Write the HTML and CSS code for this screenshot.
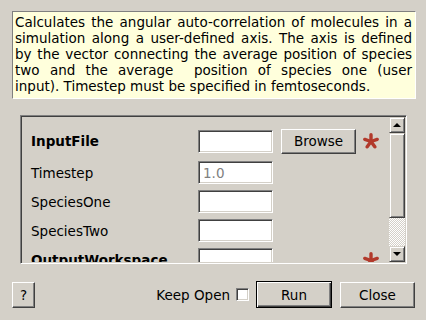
FILE: index.html
```html
<!DOCTYPE html>
<html lang="en">
<head>
    <meta charset="UTF-8">
    <title>CalculateAngularAutoCorrelation</title>
    <link rel="stylesheet" href="styles.css">
</head>
<body>
    <div class="dialog">
        <div class="description">
            <div class="line">Calculates the angular auto-correlation of molecules in a</div>
            <div class="line">simulation along a user-defined axis. The axis is defined</div>
            <div class="line">by the vector connecting the average position of species</div>
            <div class="line">two and the average &nbsp;position of species one (user</div>
            <div class="line last">input). Timestep must be specified in femtoseconds.</div>
        </div>

        <div class="scroll-area">
            <div class="viewport">
                <div class="props">
                    <label class="prop-name required">InputFile</label>
                    <input class="prop-input" type="text">
                    <button class="btn browse">Browse</button>
                    <svg class="star" viewBox="0 0 16 16"><g stroke="#b23a2c" stroke-width="3.4" stroke-linecap="round"><line x1="8" y1="8.5" x2="8" y2="1.8"/><line x1="8" y1="8.5" x2="14.2" y2="6.4"/><line x1="8" y1="8.5" x2="11.8" y2="13.8"/><line x1="8" y1="8.5" x2="4.2" y2="13.8"/><line x1="8" y1="8.5" x2="1.8" y2="6.4"/></g></svg>

                    <label class="prop-name">Timestep</label>
                    <input class="prop-input" type="text" placeholder="1.0">
                    <span></span><span></span>

                    <label class="prop-name">SpeciesOne</label>
                    <input class="prop-input" type="text">
                    <span></span><span></span>

                    <label class="prop-name">SpeciesTwo</label>
                    <input class="prop-input" type="text">
                    <span></span><span></span>

                    <label class="prop-name required">OutputWorkspace</label>
                    <input class="prop-input" type="text">
                    <span></span>
                    <svg class="star" viewBox="0 0 16 16"><g stroke="#b23a2c" stroke-width="3.4" stroke-linecap="round"><line x1="8" y1="8.5" x2="8" y2="1.8"/><line x1="8" y1="8.5" x2="14.2" y2="6.4"/><line x1="8" y1="8.5" x2="11.8" y2="13.8"/><line x1="8" y1="8.5" x2="4.2" y2="13.8"/><line x1="8" y1="8.5" x2="1.8" y2="6.4"/></g></svg>
                </div>
            </div>
            <div class="scrollbar">
                <div class="sb-btn"><span class="arrow up"></span></div>
                <div class="sb-handle"></div>
                <div class="sb-track"></div>
                <div class="sb-btn"><span class="arrow down"></span></div>
            </div>
        </div>

        <div class="footer">
            <button class="btn help">?</button>
            <div class="spacer"></div>
            <label class="keep-open">Keep Open <span class="checkbox"></span></label>
            <button class="btn run">Run</button>
            <button class="btn close">Close</button>
        </div>
    </div>
</body>
</html>
```

FILE: styles.css
```css
body {
    margin: 0;
    padding: 0;
    background-color: #d4d0c8;
    font-family: "DejaVu Sans", sans-serif;
    font-size: 13.5px;
    color: #000;
}

.dialog {
    width: 426px;
    height: 320px;
    box-sizing: border-box;
    padding: 11px 10px 0 12px;
}

.description {
    height: 88px;
    box-sizing: border-box;
    background-color: #ffffdc;
    border: 1px solid;
    border-color: #808080 #ffffff #ffffff #808080;
    padding: 2px 3px 4px 2px;
    line-height: 16px;
}

.description .line {
    text-align: justify;
    text-align-last: justify;
    white-space: nowrap;
}

.description .line.last {
    text-align-last: left;
}

.scroll-area {
    display: flex;
    margin: 16px 9px 0 8px;
    height: 149px;
    box-sizing: border-box;
    border: 1px solid;
    border-color: #808080 #ffffff #ffffff #808080;
    box-shadow: inset 1px 1px #404040, inset -1px -1px #d4d0c8;
    padding: 1px;
}

.viewport {
    flex: 1;
    overflow: hidden;
}

.props {
    display: grid;
    grid-template-columns: 159px 75px 75px 16px;
    grid-template-rows: 28px;
    grid-auto-rows: 23px;
    column-gap: 8px;
    row-gap: 6px;
    align-items: center;
    padding: 10px 0 0 9px;
}

.prop-name.required {
    font-weight: bold;
}

.prop-input {
    width: 75px;
    height: 23px;
    box-sizing: border-box;
    margin: 0;
    padding: 0 4px;
    background: #fff;
    border: 1px solid;
    border-color: #808080 #ffffff #ffffff #808080;
    box-shadow: inset 1px 1px #404040, inset -1px -1px #d4d0c8;
    font-family: "DejaVu Sans", sans-serif;
    font-size: 13.5px;
    outline: none;
}

.prop-input::placeholder {
    color: #808080;
}

.star {
    width: 16px;
    height: 16px;
    margin-left: -1px;
}

.btn {
    margin: 0;
    padding: 0;
    background-color: #d4d0c8;
    border: 1px solid;
    border-color: #ffffff #404040 #404040 #ffffff;
    box-shadow: inset -1px -1px #808080;
    font-family: "DejaVu Sans", sans-serif;
    font-size: 13.5px;
    color: #000;
}

.browse {
    width: 75px;
    height: 25px;
}

.scrollbar {
    width: 16px;
    display: flex;
    flex-direction: column;
}

.sb-btn,
.sb-handle {
    box-sizing: border-box;
    background-color: #d4d0c8;
    border: 1px solid;
    border-color: #d4d0c8 #404040 #404040 #d4d0c8;
    box-shadow: inset 1px 1px #ffffff, inset -1px -1px #808080;
}

.sb-btn {
    height: 16px;
    display: flex;
    align-items: center;
    justify-content: center;
}

.sb-handle {
    height: 85px;
}

.sb-track {
    flex: 1;
    background-image: repeating-conic-gradient(#ffffff 0 25%, #d4d0c8 0 50%);
    background-size: 2px 2px;
}

.arrow {
    width: 0;
    height: 0;
    border-left: 4px solid transparent;
    border-right: 4px solid transparent;
}

.arrow.up {
    border-bottom: 4px solid #000;
}

.arrow.down {
    border-top: 4px solid #000;
}

.footer {
    display: flex;
    align-items: center;
    margin-top: 17px;
    padding-right: 1px;
}

.help {
    width: 23px;
    height: 26px;
}

.spacer {
    flex: 1;
}

.keep-open {
    display: flex;
    align-items: center;
}

.checkbox {
    width: 13px;
    height: 13px;
    box-sizing: border-box;
    margin-left: 6px;
    background: #fff;
    border: 1px solid;
    border-color: #808080 #ffffff #ffffff #808080;
    box-shadow: inset 1px 1px #404040, inset -1px -1px #d4d0c8;
}

.run {
    width: 76px;
    height: 27px;
    margin-left: 7px;
    border: 1px solid #000;
    box-shadow: inset 1px 1px #ffffff, inset -1px -1px #404040, inset -2px -2px #808080;
}

.close {
    width: 75px;
    height: 26px;
    margin-left: 8px;
}
```
